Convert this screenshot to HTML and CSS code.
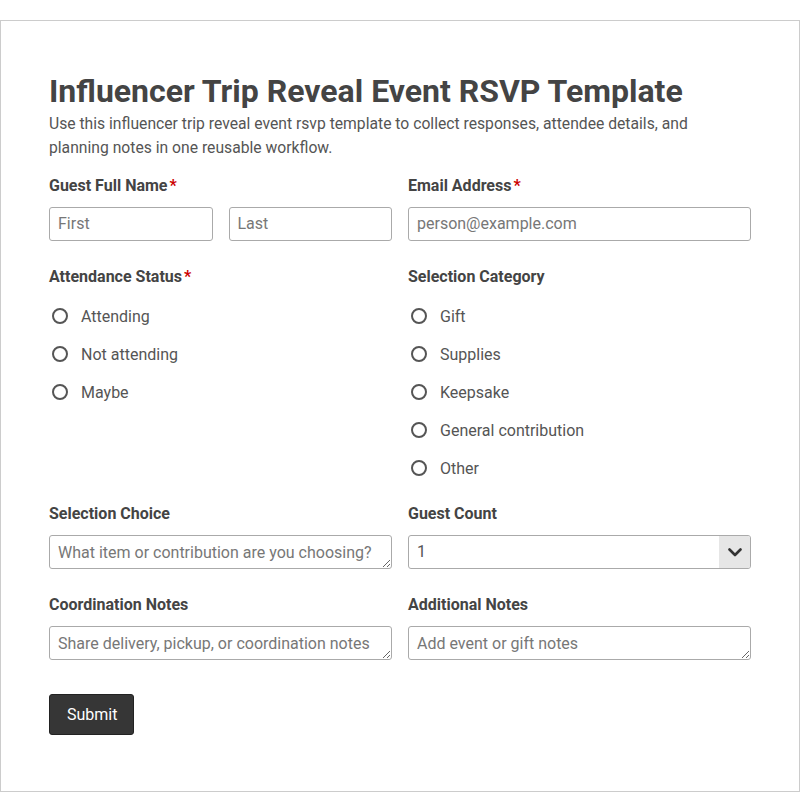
FILE: index.html
```html
<!DOCTYPE html>
<html lang="en">
<head>
<meta charset="utf-8">
<title>Influencer Trip Reveal Event RSVP Template</title>
<link rel="stylesheet" href="styles.css">
</head>
<body>
<main class="card">
  <h1 class="title">Influencer Trip Reveal Event RSVP Template</h1>
  <p class="desc">Use this influencer trip reveal event rsvp template to collect responses, attendee details, and planning notes in one reusable workflow.</p>
  <form class="grid">
    <div class="field">
      <label class="label">Guest Full Name<span class="req">*</span></label>
      <div class="name-row">
        <input class="input" type="text" placeholder="First">
        <input class="input" type="text" placeholder="Last">
      </div>
    </div>
    <div class="field">
      <label class="label">Email Address<span class="req">*</span></label>
      <input class="input" type="email" placeholder="person@example.com">
    </div>
    <div class="field">
      <label class="label">Attendance Status<span class="req">*</span></label>
      <div class="radios">
        <label class="radio"><input type="radio" name="att"><span>Attending</span></label>
        <label class="radio"><input type="radio" name="att"><span>Not attending</span></label>
        <label class="radio"><input type="radio" name="att"><span>Maybe</span></label>
      </div>
    </div>
    <div class="field">
      <label class="label">Selection Category</label>
      <div class="radios">
        <label class="radio"><input type="radio" name="cat"><span>Gift</span></label>
        <label class="radio"><input type="radio" name="cat"><span>Supplies</span></label>
        <label class="radio"><input type="radio" name="cat"><span>Keepsake</span></label>
        <label class="radio"><input type="radio" name="cat"><span>General contribution</span></label>
        <label class="radio"><input type="radio" name="cat"><span>Other</span></label>
      </div>
    </div>
    <div class="field">
      <label class="label">Selection Choice</label>
      <textarea class="input area" rows="1" placeholder="What item or contribution are you choosing?"></textarea>
    </div>
    <div class="field">
      <label class="label">Guest Count</label>
      <div class="select-wrap">
        <select class="input select">
          <option>1</option>
          <option>2</option>
          <option>3</option>
          <option>4</option>
        </select>
        <span class="arrow"><svg width="14" height="9" viewBox="0 0 14 9"><path d="M1.5 1.5 L7 7 L12.5 1.5" fill="none" stroke="#333" stroke-width="2.6" stroke-linecap="round" stroke-linejoin="round"/></svg></span>
      </div>
    </div>
    <div class="field">
      <label class="label">Coordination Notes</label>
      <textarea class="input area" rows="1" placeholder="Share delivery, pickup, or coordination notes"></textarea>
    </div>
    <div class="field">
      <label class="label">Additional Notes</label>
      <textarea class="input area" rows="1" placeholder="Add event or gift notes"></textarea>
    </div>
  </form>
  <button class="submit" type="button">Submit</button>
</main>
</body>
</html>
```
FILE: styles.css
```css
* { box-sizing: border-box; }
html, body { margin: 0; padding: 0; background: #fff; }
body { font-family: Roboto, "Liberation Sans", Arial, sans-serif; color: #444; }
.card {
  margin-top: 20px;
  height: 772px;
  border: 1px solid #ccc;
  padding: 49px 48px 48px;
}
.title {
  margin: 0;
  font-size: 32px;
  line-height: 42px;
  font-weight: 700;
  color: #444;
}
.desc {
  margin: 0 0 15px;
  font-size: 15.7px;
  line-height: 24px;
  color: #555;
}
.grid {
  display: grid;
  grid-template-columns: 1fr 1fr;
  column-gap: 16px;
  row-gap: 25px;
}
.field { display: flex; flex-direction: column; min-width: 0; }
.label {
  display: block;
  font-size: 16px;
  line-height: 22px;
  font-weight: 700;
  color: #444;
  margin-bottom: 10px;
}
.req { color: #c00; margin-left: 2px; }
.name-row { display: grid; grid-template-columns: 1fr 1fr; column-gap: 16px; }
.input {
  display: block;
  width: 100%;
  height: 34px;
  margin: 0;
  border: 1px solid #aaa;
  border-radius: 3px;
  padding: 0 8px 1px;
  font-family: Roboto, "Liberation Sans", Arial, sans-serif;
  font-size: 16px;
  color: #555;
  background: #fff;
  outline: none;
}
.input::placeholder { color: #777; opacity: 1; }
.area {
  height: 34px;
  padding: 7px 8px 5px;
  line-height: 20px;
  resize: vertical;
  overflow: hidden;
}
.radios { display: flex; flex-direction: column; gap: 18px; padding-top: 8px; }
.radio {
  display: flex;
  align-items: center;
  height: 20px;
  font-size: 16px;
  color: #555;
}
.radio input {
  appearance: none;
  -webkit-appearance: none;
  width: 16px;
  height: 16px;
  margin: 0 13px 0 3px;
  border: 2px solid #555;
  border-radius: 50%;
  background: #fff;
  flex: none;
}
.select-wrap { position: relative; }
.select {
  appearance: none;
  -webkit-appearance: none;
  padding-right: 40px;
}
.arrow {
  position: absolute;
  top: 1px;
  right: 1px;
  bottom: 1px;
  width: 31px;
  background: #e6e6e6;
  border-radius: 0 2px 2px 0;
  display: flex;
  align-items: center;
  justify-content: center;
  pointer-events: none;
}
.submit {
  display: block;
  margin-top: 34px;
  height: 41px;
  padding: 0 16px 0 17px;
  background: #363636;
  color: #fff;
  border: 1px solid #222;
  border-radius: 3px;
  font-family: Roboto, "Liberation Sans", Arial, sans-serif;
  font-size: 16px;
}
```
